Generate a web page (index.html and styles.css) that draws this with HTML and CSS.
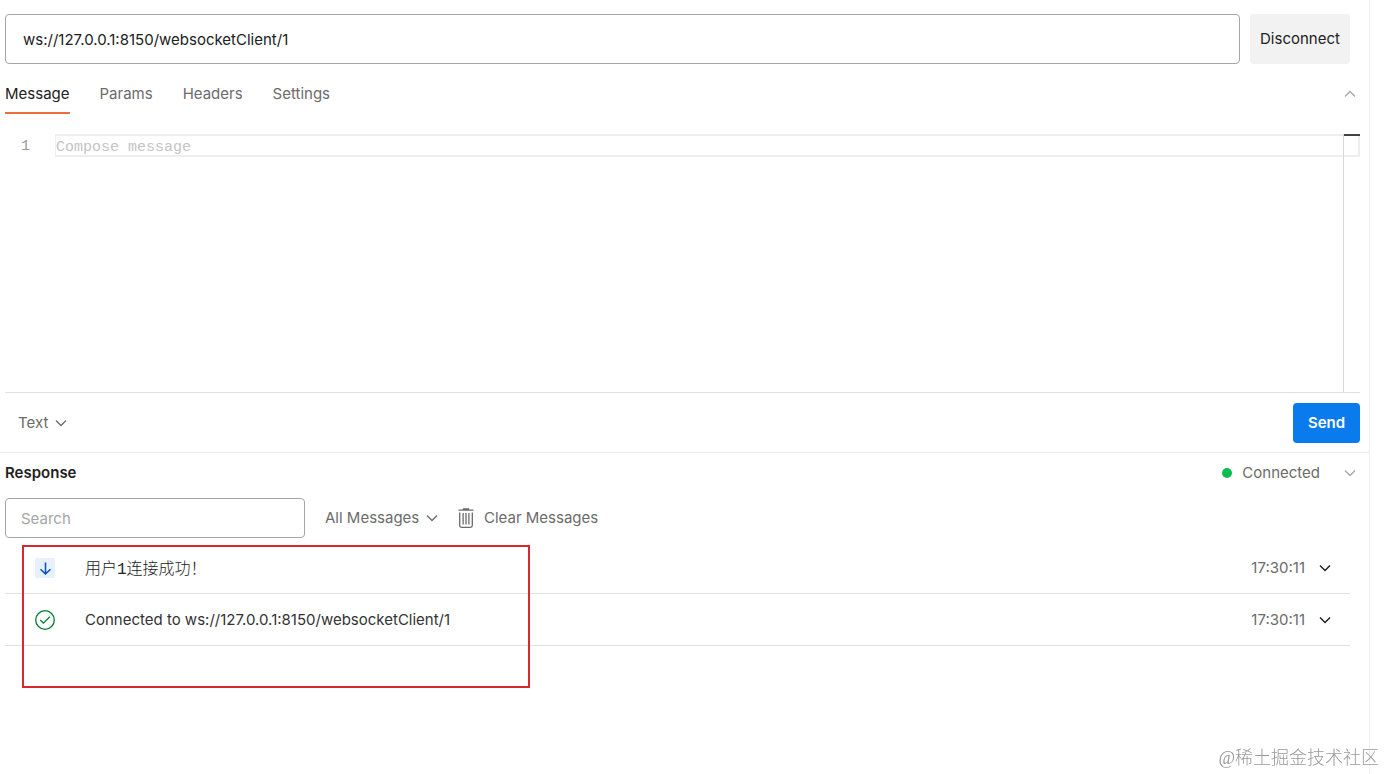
FILE: index.html
```html
<!DOCTYPE html>
<html lang="en">
<head>
  <meta charset="UTF-8">
  <meta name="viewport" content="width=device-width, initial-scale=1.0">
  <title>WebSocket Request</title>
  <link rel="stylesheet" href="styles.css">
</head>
<body>
  <main class="panel">
    <form class="url-bar">
      <input type="text" class="url-input" aria-label="Server URL" value="ws://127.0.0.1:8150/websocketClient/1">
      <button type="button" class="disconnect-btn">Disconnect</button>
    </form>

    <div class="tab-bar">
      <nav class="tabs">
        <a href="#message" class="active">Message</a>
        <a href="#params">Params</a>
        <a href="#headers">Headers</a>
        <a href="#settings">Settings</a>
      </nav>
      <button type="button" class="icon-btn" aria-label="Collapse message">
        <svg width="12" height="8" viewBox="0 0 12 8"><path d="M1 6.5 6 1.5 11 6.5"/></svg>
      </button>
    </div>

    <section class="editor" id="message">
      <span class="line-number">1</span>
      <textarea class="compose" rows="1" placeholder="Compose message" aria-label="Compose message"></textarea>
      <div class="ruler"></div>
    </section>

    <div class="send-bar">
      <div class="dropdown">
        <select aria-label="Message format">
          <option>Text</option>
        </select>
        <svg width="12" height="8" viewBox="0 0 12 8"><path d="M1 1.5 6 6.5 11 1.5"/></svg>
      </div>
      <button type="button" class="send-btn">Send</button>
    </div>

    <section class="response">
      <header class="response-header">
        <h2>Response</h2>
        <span class="status">Connected</span>
        <button type="button" class="icon-btn" aria-label="Collapse response">
          <svg width="12" height="8" viewBox="0 0 12 8"><path d="M1 1.5 6 6.5 11 1.5"/></svg>
        </button>
      </header>

      <div class="filters">
        <input type="text" class="search" placeholder="Search" aria-label="Search messages">
        <div class="dropdown">
          <select aria-label="Filter messages">
            <option>All Messages</option>
          </select>
          <svg width="12" height="8" viewBox="0 0 12 8"><path d="M1 1.5 6 6.5 11 1.5"/></svg>
        </div>
        <button type="button" class="clear-btn">
          <svg width="16" height="20" viewBox="0 0 16 20">
            <path d="M0.5 2.2H15.5M5.5 1.7V0.8H10.5V1.7M1.7 4.5V17.5Q1.7 19.3 3.5 19.3H12.5Q14.3 19.3 14.3 17.5V4.5M5.1 5V16.5M8 5V16.5M10.9 5V16.5"/>
          </svg>
          Clear Messages
        </button>
      </div>

      <ul class="messages">
        <li>
          <svg class="icon-received" width="20" height="20" viewBox="0 0 20 20">
            <rect width="20" height="20" rx="2"/>
            <path d="M10.5 4.5V16M5.5 11.2 10.5 16 15.5 11.2"/>
          </svg>
          <span class="text mono">用户1连接成功！</span>
          <time>17:30:11</time>
          <button type="button" class="icon-btn dark" aria-label="Expand message">
            <svg width="12" height="8" viewBox="0 0 12 8"><path d="M1 1.5 6 6.5 11 1.5"/></svg>
          </button>
        </li>
        <li>
          <svg class="icon-connected" width="20" height="20" viewBox="0 0 20 20">
            <circle cx="10" cy="10" r="9.3"/>
            <path d="M5.2 10 8.5 13.2 14.8 6.8"/>
          </svg>
          <span class="text">Connected to ws://127.0.0.1:8150/websocketClient/1</span>
          <time>17:30:11</time>
          <button type="button" class="icon-btn dark" aria-label="Expand message">
            <svg width="12" height="8" viewBox="0 0 12 8"><path d="M1 1.5 6 6.5 11 1.5"/></svg>
          </button>
        </li>
      </ul>
      <div class="highlight"></div>
    </section>
  </main>
  <div class="watermark">@稀土掘金技术社区</div>
</body>
</html>
```
FILE: styles.css
```css
* {
  box-sizing: border-box;
}
body {
  margin: 0;
  background: #fff;
  color: #212121;
  font-family: Inter, "Noto Sans CJK SC", sans-serif;
  font-size: 15px;
  line-height: 20px;
}
input, button, select, textarea {
  font: inherit;
  color: inherit;
  margin: 0;
}
button {
  border: none;
  padding: 0;
  background: none;
  cursor: pointer;
}
svg {
  display: block;
  flex: none;
  fill: none;
  stroke: currentColor;
  stroke-width: 1.3;
}
.panel {
  min-height: 100vh;
  margin-right: 15px;
  padding-top: 14px;
  border-right: 1px solid #ededed;
}

/* url */
.url-bar {
  display: flex;
  gap: 10px;
  padding: 0 19px 0 5px;
}
.url-input {
  flex: 1;
  min-width: 0;
  height: 50px;
  padding: 0 17px;
  border: 1px solid #a6a6a6;
  border-radius: 4px;
}
.disconnect-btn {
  width: 100px;
  height: 50px;
  border-radius: 4px;
  background: #f2f2f2;
}

/* tabs */
.tab-bar {
  display: flex;
  justify-content: space-between;
  align-items: center;
  padding: 10px 13px 0 5px;
}
.tabs {
  display: flex;
  gap: 30px;
}
.tabs a {
  padding: 10px 0 8px;
  border-bottom: 2px solid transparent;
  color: #6b6b6b;
  text-decoration: none;
}
.tabs a.active {
  color: #212121;
  border-color: #f26b3a;
}
.icon-btn {
  color: #a6a6a6;
}
.icon-btn.dark {
  color: #212121;
}
.icon-btn.dark svg {
  stroke-width: 1.5;
}

/* editor */
.editor {
  position: relative;
  display: flex;
  align-items: flex-start;
  height: 259px;
  margin: 20px 9px 0 5px;
  border-bottom: 1px solid #e0e0e0;
  font-family: "Liberation Mono", monospace;
}
.line-number {
  width: 50px;
  padding: 3px 0 0 16px;
  color: #999;
}
.compose {
  flex: 1;
  height: 23px;
  padding: 1px 0 0;
  border: 2px solid #eee;
  border-left-width: 1px;
  background: none;
  line-height: 22px;
  resize: none;
  overflow: hidden;
}
::placeholder {
  color: #a6a6a6;
  opacity: 1;
}
.compose::placeholder {
  color: #c4c4c4;
}
.ruler {
  position: absolute;
  top: 0;
  right: 0;
  bottom: 0;
  width: 17px;
  border-left: 1px solid #d9d9d9;
}
.ruler::before {
  content: "";
  display: block;
  height: 2px;
  background: #424242;
}

/* send */
.send-bar {
  display: flex;
  justify-content: space-between;
  align-items: center;
  height: 60px;
  padding: 0 9px 0 18px;
  border-bottom: 1px solid #ededed;
}
.dropdown {
  display: flex;
  align-items: center;
  color: #6b6b6b;
}
.dropdown select {
  appearance: none;
  margin-right: -12px;
  padding: 0 18px 0 0;
  border: none;
  background: none;
}
.dropdown svg {
  pointer-events: none;
}
.send-btn {
  width: 67px;
  height: 40px;
  border-radius: 4px;
  background: #097bed;
  color: #fff;
  font-weight: 600;
}

/* response */
.response {
  position: relative;
}
.response-header {
  display: flex;
  align-items: center;
  height: 40px;
  padding: 0 13px 0 5px;
}
.response-header h2 {
  flex: 1;
  margin: 0;
  font-size: 15px;
  font-weight: 600;
}
.status {
  display: flex;
  align-items: center;
  gap: 10px;
  margin-right: 24px;
  color: #6b6b6b;
}
.status::before {
  content: "";
  width: 10px;
  height: 10px;
  border-radius: 50%;
  background: #0cbb52;
}
.filters {
  display: flex;
  align-items: center;
  gap: 20px;
  padding: 5px 5px 4px;
}
.search {
  width: 300px;
  height: 40px;
  padding: 0 15px;
  border: 1px solid #a6a6a6;
  border-radius: 4px;
}
.clear-btn {
  display: flex;
  align-items: center;
  gap: 10px;
  color: #6b6b6b;
}
.messages {
  margin: 0;
  padding: 0 19px 0 5px;
  list-style: none;
}
.messages li {
  display: flex;
  align-items: center;
  height: 52px;
  padding: 0 19px 0 30px;
  border-bottom: 1px solid #e0e0e0;
}
.messages .text {
  flex: 1;
  margin-left: 30px;
  color: #333;
}
.messages .mono {
  padding-top: 4px;
  color: #212121;
  font-family: "Liberation Mono", "Noto Sans CJK SC", monospace;
  font-size: 16px;
  font-weight: 300;
}
.messages time {
  margin-right: 14px;
  color: #6b6b6b;
}
.icon-received rect {
  fill: #e6f0ff;
  stroke: none;
}
.icon-received {
  color: #0053b8;
  stroke-width: 1.5;
}
.icon-connected {
  color: #007f31;
}

/* red marker over the log */
.highlight {
  position: absolute;
  top: 92px;
  left: 22px;
  width: 508px;
  height: 143px;
  border: 2px solid #d7282f;
  pointer-events: none;
}
.watermark {
  position: fixed;
  right: 6px;
  bottom: 6px;
  color: #999;
  font-family: "Liberation Serif", "Noto Sans CJK SC", serif;
  font-size: 18px;
  font-weight: 300;
}
```
